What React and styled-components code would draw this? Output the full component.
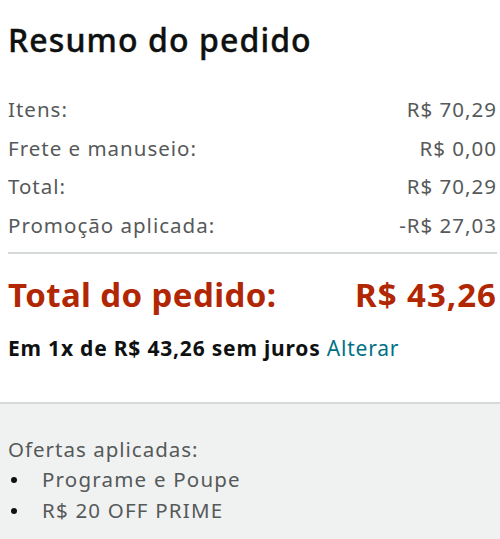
import styled, { createGlobalStyle } from "styled-components";

const GlobalStyle = createGlobalStyle`
  body {
    margin: 0;
    background: #fff;
    font-family: "Noto Sans", "Open Sans", sans-serif;
  }
`;

const Card = styled.section`
  width: 500px;
  height: 539px;
  display: flex;
  flex-direction: column;
  overflow: hidden;
`;

const Main = styled.div`
  padding: 20px 3px 0 8px;
`;

const Title = styled.h1`
  margin: 0 0 30px;
  font-size: 32px;
  font-weight: 500;
  line-height: 40px;
  letter-spacing: 1.1px;
  color: #0f1111;
  -webkit-text-stroke: 0.4px #0f1111;
`;

const Row = styled.div`
  display: flex;
  justify-content: space-between;
  font-size: 20.5px;
  line-height: 38.5px;
  letter-spacing: 1px;
  color: #565959;
`;

const Divider = styled.hr`
  margin: 8px 0 0;
  border: none;
  border-top: 2px solid #d5d9d9;
`;

const GrandTotal = styled.div`
  display: flex;
  justify-content: space-between;
  margin-top: 21px;
  font-size: 33px;
  font-weight: 700;
  line-height: 40px;
  letter-spacing: 0.4px;
  color: #b12704;
`;

const Amount = styled.span`
  letter-spacing: 1px;
`;

const Installments = styled.p`
  margin: 19px 0 0;
  font-size: 21px;
  font-weight: 700;
  line-height: 28px;
  letter-spacing: 0.8px;
  color: #0f1111;
`;

const Link = styled.a`
  font-weight: 400;
  color: #007185;
  text-decoration: none;
`;

const Offers = styled.div`
  flex: 1;
  margin-top: 40px;
  padding: 30px 8px 0;
  background: #f0f2f2;
  border-top: 2px solid #d5d9d9;
`;

const OffersTitle = styled.div`
  font-size: 20.5px;
  line-height: 30px;
  letter-spacing: 1px;
  color: #565959;
`;

const List = styled.ul`
  margin: 0;
  padding: 0;
  list-style: none;
`;

const Item = styled.li`
  display: flex;
  align-items: center;
  font-size: 20.5px;
  line-height: 30.5px;
  letter-spacing: 1.2px;
  color: #565959;

  &::before {
    content: "";
    flex: none;
    width: 6px;
    height: 6px;
    margin: 2px 25px 0 3px;
    border-radius: 50%;
    background: #0f1111;
  }
`;

const rows = [
  ["Itens:", "R$ 70,29"],
  ["Frete e manuseio:", "R$ 0,00"],
  ["Total:", "R$ 70,29"],
  ["Promoção aplicada:", "-R$ 27,03"],
];

export default function App() {
  return (
    <Card>
      <GlobalStyle />
      <Main>
        <Title>Resumo do pedido</Title>
        {rows.map(([label, value]) => (
          <Row key={label}>
            <span>{label}</span>
            <span>{value}</span>
          </Row>
        ))}
        <Divider />
        <GrandTotal>
          <span>Total do pedido:</span>
          <Amount>R$ 43,26</Amount>
        </GrandTotal>
        <Installments>
          Em 1x de R$ 43,26 sem juros <Link href="#">Alterar</Link>
        </Installments>
      </Main>
      <Offers>
        <OffersTitle>Ofertas aplicadas:</OffersTitle>
        <List>
          <Item>Programe e Poupe</Item>
          <Item>R$ 20 OFF PRIME</Item>
        </List>
      </Offers>
    </Card>
  );
}
